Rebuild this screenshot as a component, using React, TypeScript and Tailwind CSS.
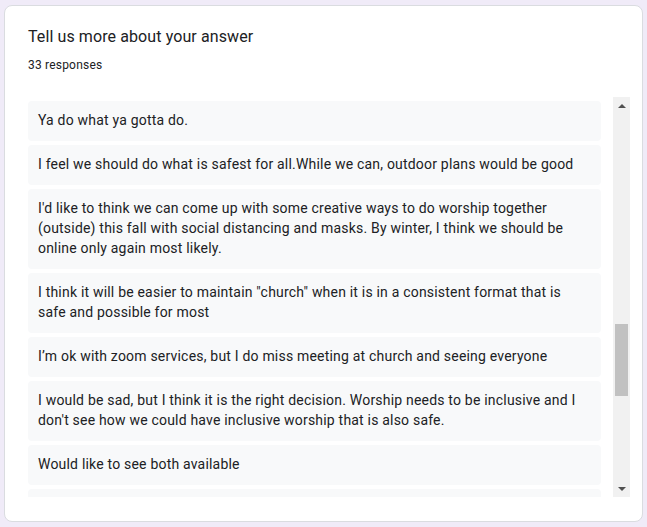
import React from "react";

const answers: string[] = [
  "Ya do what ya gotta do.",
  "I feel we should do what is safest for all.While we can, outdoor plans would be good",
  "I'd like to think we can come up with some creative ways to do worship together (outside) this fall with social distancing and masks. By winter, I think we should be online only again most likely.",
  "I think it will be easier to maintain \"church\" when it is in a consistent format that is safe and possible for most",
  "I’m ok with zoom services, but I do miss meeting at church and seeing everyone",
  "I would be sad, but I think it is the right decision. Worship needs to be inclusive and I don't see how we could have inclusive worship that is also safe.",
  "Would like to see both available",
];

export default function App() {
  return (
    <div className="w-[647px] h-[527px] bg-[#f0ebf8] pt-[5px] pl-[4px] overflow-hidden" style={{ fontFamily: "Roboto, 'Liberation Sans', sans-serif" }}>
      <div className="w-[639px] h-[517px] bg-white rounded-[8px] border border-[#dadce0] pl-[23px] pt-[19px] flex flex-col">
        <div className="text-[16px] leading-[24px] text-[#202124] tracking-[0.1px]">
          Tell us more about your answer
        </div>
        <div className="mt-[8px] text-[12px] leading-[16px] text-[#202124] tracking-[0.2px]">33 responses</div>
        <div className="mt-[24px] w-[602px] h-[400px] flex">
          <div className="flex-1 overflow-hidden pt-[4px] pr-[12px] flex flex-col gap-[4px]">
            {answers.map((a, i) => (
              <div key={i} className="shrink-0 bg-[#f8f9fa] rounded-[4px] px-[10px] pt-[9px] pb-[11px] text-[14px] leading-[20px] text-[#202124] tracking-[0.2px]">
                {a}
              </div>
            ))}
            <div className="shrink-0 h-[40px] bg-[#f8f9fa] rounded-[4px]" />
          </div>
          <div className="w-[17px] h-[400px] bg-[#f1f1f1] flex flex-col items-center">
            <div className="h-[17px] w-full flex items-center justify-center">
              <div className="w-0 h-0 border-l-[4px] border-r-[4px] border-b-[4px] border-l-transparent border-r-transparent border-b-[#505050]" />
            </div>
            <div className="flex-1 w-full relative">
              <div className="absolute left-[2px] right-[2px] top-[210px] h-[72px] bg-[#c1c1c1]" />
            </div>
            <div className="h-[17px] w-full flex items-center justify-center">
              <div className="w-0 h-0 border-l-[4px] border-r-[4px] border-t-[4px] border-l-transparent border-r-transparent border-t-[#505050]" />
            </div>
          </div>
        </div>
      </div>
    </div>
  );
}
